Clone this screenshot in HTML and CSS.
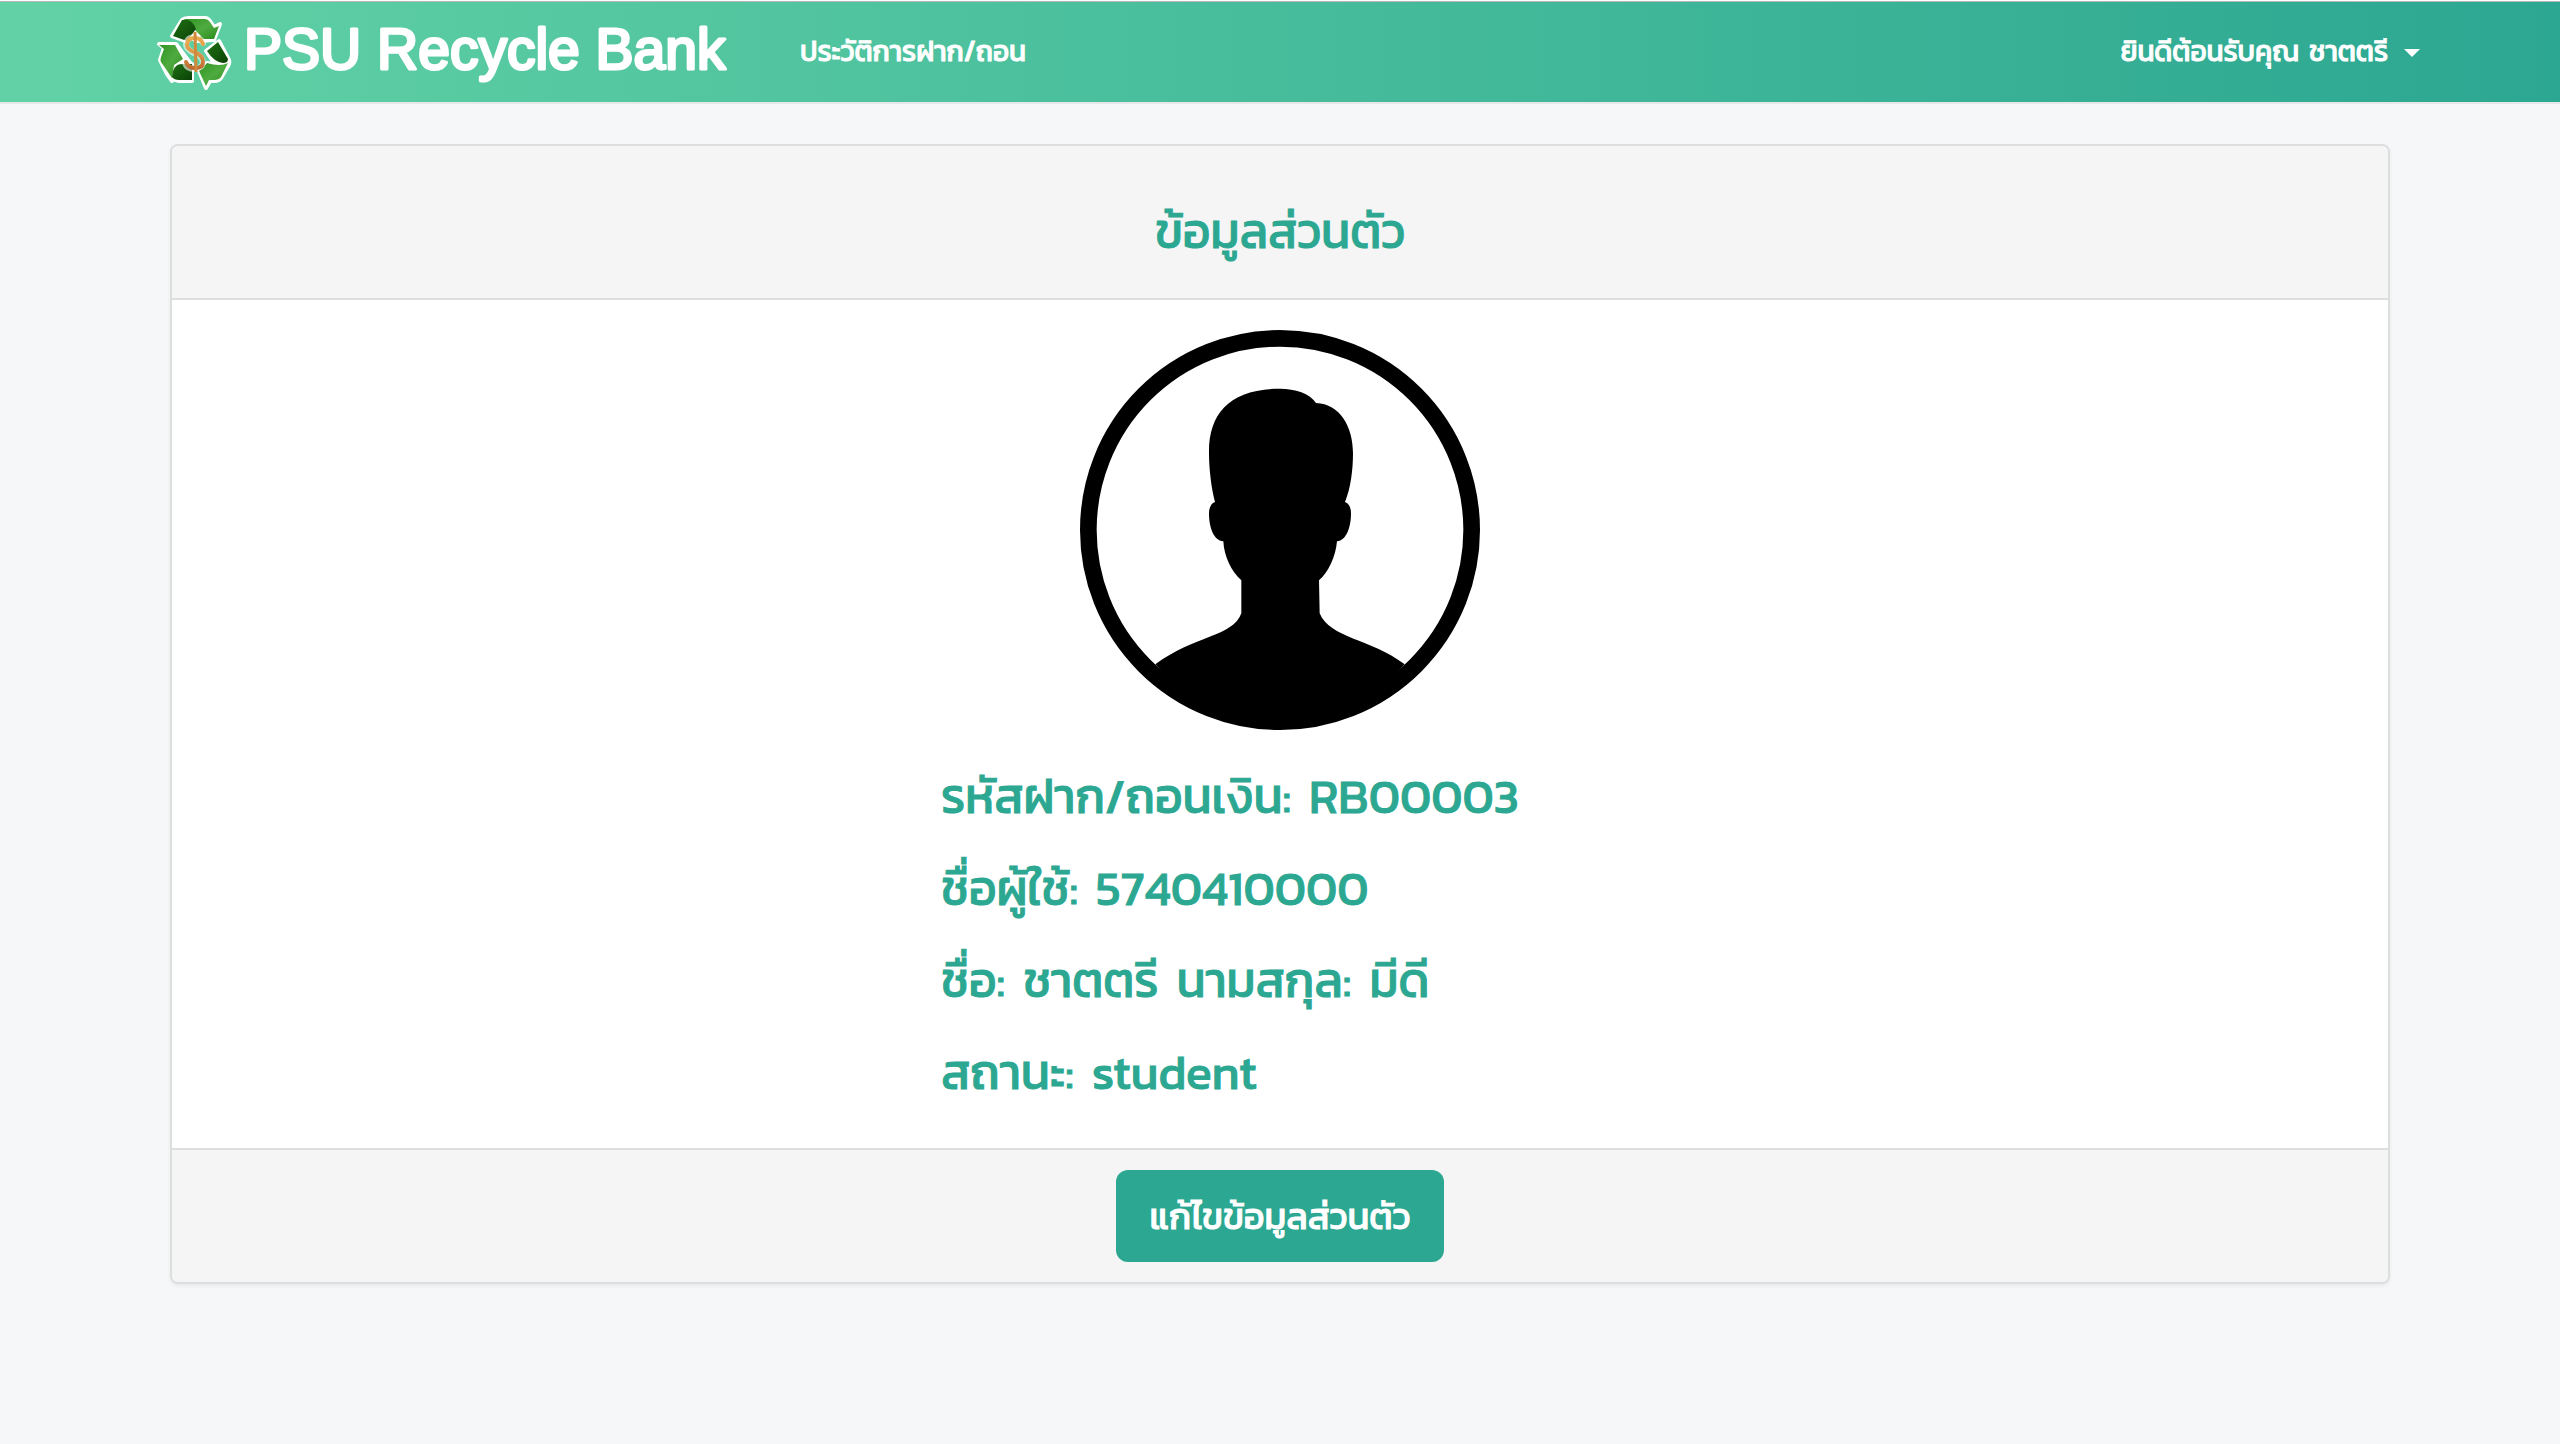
FILE: index.html
```html
<!DOCTYPE html>
<html lang="th">
<head>
<meta charset="utf-8">
<title>PSU Recycle Bank</title>
<meta name="viewport" content="width=device-width, initial-scale=1">
<link rel="stylesheet" href="styles.css">
</head>
<body>
<header class="navbar">
  <a class="brand" href="#" aria-label="PSU Recycle Bank">
    <svg class="brand-icon" viewBox="0 0 90 85" aria-hidden="true">
      <defs>
        <linearGradient id="leaf" x1="0" y1="0" x2="1" y2="1"><stop offset="0" stop-color="#2f9423"/><stop offset=".5" stop-color="#4fab3f"/><stop offset="1" stop-color="#2b8a1c"/></linearGradient>
        <linearGradient id="dark" x1="0" y1="0" x2="1" y2="1"><stop offset="0" stop-color="#1f7014"/><stop offset="1" stop-color="#0b4207"/></linearGradient>
        <linearGradient id="gold" gradientUnits="userSpaceOnUse" x1="0" y1="24" x2="0" y2="63"><stop offset="0" stop-color="#f0b04c"/><stop offset=".5" stop-color="#dc9a4c"/><stop offset="1" stop-color="#b5602a"/></linearGradient>
      </defs>
      <g stroke="#fff" stroke-width="4" stroke-linejoin="round" fill="#fff">
        <path d="M22 27 32 11Q34 9 38 9H55Q58 9 60 12L64 18 70 15 64 31 46 32 38 26 36 32Z"/>
        <path d="M9 35 26 35 41 55 24 53 22 72 17 65 10 51 14 39Z"/>
        <path d="M17 64 23 55 42 55 42 72 29 72Q22 71 17 64Z"/>
        <path d="M56 42 69 32 79 51Q80 54 78 57L64 54Z"/>
        <path d="M49 62 57 54 78 57 71 69Q69 72 64 72H60L56 79Z"/>
      </g>
      <path fill="url(#leaf)" d="M34 10H55Q58 10 60 13L64 19 69 17 64 30 48 30 51 27Z"/>
      <path fill="url(#dark)" d="M23 27 32 11Q42 9 46 20L37 32Z"/>
      <path fill="url(#leaf)" d="M9 36H25L33 50 24 56 22 69 11 53Q10 51 11 48L14 40Z"/>
      <path fill="url(#dark)" d="M22 68Q23 55 32 55H42V71H29Q24 71 22 68Z"/>
      <path fill="url(#dark)" d="M57 42 68 33 78 50Q78 54 73 54 64 53 57 42Z"/>
      <path fill="url(#leaf)" d="M49 62 57 54Q70 58 78 54L71 68Q69 71 64 71H59L56 77Z"/>
      <path fill="none" stroke="#fff" stroke-opacity=".6" stroke-width="6" stroke-linecap="round" d="M53 34Q50 28 44 28 36 29 36 36 37 41 44 44 53 47 53 54 52 59 45 60 37 60 35 54"/>
      <path fill="none" stroke="url(#gold)" stroke-width="4" stroke-linecap="round" d="M53 35Q51 29 45 29 37 29 37 36 37 40 44 43 53 46 53 53 53 59 45 59 38 59 36 53"/>
      <path fill="none" stroke="#d08a3c" stroke-width="3" d="M45 23 46 63"/>
    </svg>
    <svg class="brand-name" viewBox="0 0 490 76"><text x="0" y="55">PSU Recycle Bank</text></svg>
  </a>
  <nav class="menu"><a href="#">ประวัติการฝาก/ถอน</a></nav>
  <button class="user" type="button"><span>ยินดีต้อนรับคุณ</span> <span>ชาตตรี</span> <span class="caret"></span></button>
</header>
<main class="page">
  <section class="card">
    <div class="card-header"><h1>ข้อมูลส่วนตัว</h1></div>
    <div class="card-body">
      <svg class="avatar" viewBox="0 0 1200 1200" role="img" aria-label="avatar">
        <circle cx="600" cy="600" r="575" fill="#fff" stroke="#000" stroke-width="50"/>
        <path d="M226 1003C340 918 460 920 484 850V751C455 725 432 680 430 634C400 632 387 590 387 550C387 532 394 520 405 516C395 480 387 420 387 370C385 250 450 176 600 176C645 176 690 190 708 219C780 222 819 290 819 370C819 420 812 475 795 516C808 520 813 535 813 550C813 590 800 632 771 634C767 680 745 728 717 751L719 850C750 925 870 925 974 1003C870 1115 750 1180 600 1180C450 1180 330 1115 226 1003Z"/>
      </svg>
      <div class="details">
        <p><span>รหัสฝาก/ถอนเงิน:</span> <span>RB00003</span></p>
        <p><span>ชื่อผู้ใช้:</span> <span>5740410000</span></p>
        <p><span>ชื่อ:</span> <span>ชาตตรี</span> <span>นามสกุล:</span> <span>มีดี</span></p>
        <p><span>สถานะ:</span> <span>student</span></p>
      </div>
    </div>
    <div class="card-footer"><button class="edit" type="button">แก้ไขข้อมูลส่วนตัว</button></div>
  </section>
</main>
</body>
</html>
```
FILE: styles.css
```css
* { box-sizing: border-box; }
body {
  margin: 0;
  min-height: 100vh;
  background: #f5f7f9;
  color: #2ca791;
  font-family: Kanit, "Noto Sans Thai", "Noto Sans", sans-serif;
  font-weight: 400;
  -webkit-text-stroke: 1px currentColor;
}
button { font: inherit; border: 0; cursor: pointer; }
a { color: inherit; text-decoration: none; }
.navbar {
  display: flex;
  align-items: center;
  height: 102px;
  padding: 0 140px 0 150px;
  border-top: 1px solid #fff;
  background: linear-gradient(to right, #62d2a6, #2ca791);
  box-shadow: inset 0 1px 0 #b3b9b7, 0 2px 0 #e5e7e8;
  color: #fff;
  font-size: 28px;
}
.brand { display: flex; align-items: center; margin-right: 66px; }
.brand-icon { width: 90px; height: 85px; }
.brand-name { width: 490px; height: 76px; margin-left: 4px; }
.brand-name text {
  font-family: "Liberation Sans", sans-serif;
  font-size: 57px;
  font-weight: 400;
  fill: #fff;
  stroke: #fff;
  stroke-width: 3px;
  stroke-linejoin: round;
}
.menu, .user { padding: 0 0 2px; }
.user {
  display: flex;
  align-items: center;
  gap: 10px;
  margin-left: auto;
  background: none;
  color: #fff;
}
.caret { margin: 4px 0 0 6px; border: 8px solid transparent; border-top-color: #fff; border-bottom: 0; }
.page { padding: 42px 170px; }
.card {
  border: 2px solid #dcdddd;
  border-radius: 8px;
  background: #fff;
  box-shadow: 0 2px 4px rgba(0, 0, 0, .06);
  overflow: hidden;
}
.card-header {
  padding: 50px 40px 32px;
  border-bottom: 2px solid #dcdddd;
  background: #f5f5f5;
  text-align: center;
}
.card-header h1 { margin: 0; font-size: 48px; font-weight: 400; line-height: 70px; }
.card-body { padding: 30px 0; }
.avatar { display: block; width: 400px; height: 400px; margin: 0 auto 20px; }
.details { display: grid; row-gap: 20px; padding: 10px 0 10px 769px; }
.details p { display: flex; gap: 18px; margin: 0; font-size: 48px; line-height: 72px; }
.card-footer {
  padding: 20px;
  border-top: 2px solid #dcdddd;
  background: #f5f5f5;
  text-align: center;
}
.edit {
  padding: 18px 34px;
  border-radius: 12px;
  background: #2ca791;
  color: #fff;
  font-size: 36px;
  line-height: 56px;
}
```
